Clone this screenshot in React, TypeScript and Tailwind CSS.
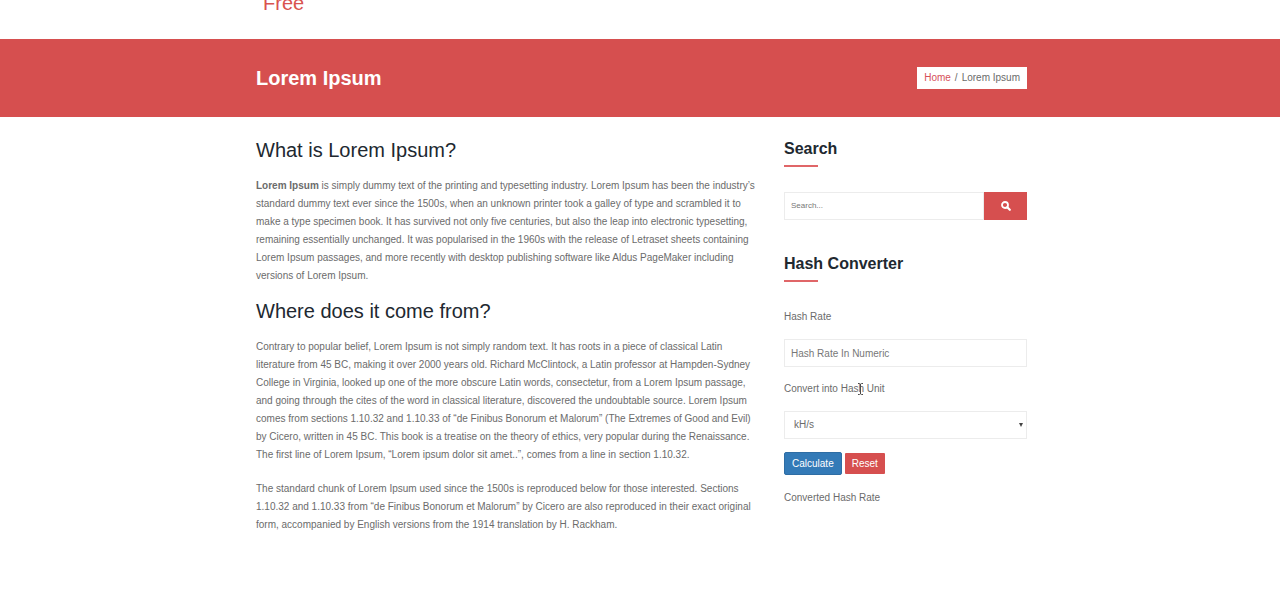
import { useState } from 'react';
import type { FormEvent, ReactNode } from 'react';

const UNITS = ['kH/s', 'MH/s', 'GH/s', 'TH/s', 'PH/s'];

function Container({ className = '', children }: { className?: string; children: ReactNode }) {
  return (
    <div className="pl-[3px]">
      <div className={`mx-auto max-w-[771px] ${className}`}>{children}</div>
    </div>
  );
}

function WidgetTitle({ children }: { children: ReactNode }) {
  return (
    <h3 className="text-base leading-[22px] font-bold text-[#212830]">
      {children}
      <span className="mt-[5px] block h-[2px] w-[34px] bg-[#e06668]" />
    </h3>
  );
}

function SearchIcon() {
  return (
    <svg viewBox="0 0 10 10" className="h-[10px] w-[10px]" fill="none" stroke="currentColor" aria-hidden="true">
      <circle cx="4" cy="4" r="3" strokeWidth="1.8" />
      <path d="M6.3 6.3 8.8 8.8" strokeWidth="2.2" strokeLinecap="round" />
    </svg>
  );
}

function TextCursor() {
  return (
    <svg
      viewBox="0 0 7 12"
      className="absolute -right-[5px] top-0 h-3 w-[7px]"
      fill="none"
      stroke="#4a4a4a"
      aria-hidden="true"
    >
      <path d="M1 .5h1.5l1 .7 1-.7H6M3.5 1v10M1 11.5h1.5l1-.7 1 .7H6" />
    </svg>
  );
}

export default function App() {
  const [rate, setRate] = useState('');
  const [unit, setUnit] = useState(UNITS[0]);
  const [result, setResult] = useState('');

  const calculate = (e: FormEvent) => {
    e.preventDefault();
    const value = Number(rate);
    if (rate && !Number.isNaN(value)) {
      setResult(`${value / 1000 ** (UNITS.indexOf(unit) + 1)} ${unit}`);
    }
  };

  const reset = () => {
    setRate('');
    setUnit(UNITS[0]);
    setResult('');
  };

  return (
    <div className="bg-white font-['Liberation_Sans',Arial,sans-serif] text-[10px] leading-[18px] text-[#6b6b6b]">
      <header className="h-[39px] overflow-hidden">
        <Container>
          <a href="#" className="-mt-2 ml-[7px] block text-xl leading-[22px] text-[#d9534f]">
            Free
          </a>
        </Container>
      </header>

      <section className="bg-[#d64f4f] py-[28px]">
        <Container className="flex items-center justify-between">
          <h1 className="text-xl leading-[22px] font-bold text-white">Lorem Ipsum</h1>
          <nav aria-label="Breadcrumb" className="flex gap-1 bg-white px-[7px] py-[2px]">
            <a href="#" className="text-[#d64f5a]">Home</a>
            <span>/</span>
            <span>Lorem Ipsum</span>
          </nav>
        </Container>
      </section>

      <Container className="flex justify-between gap-4 pt-[21px]">
        <main className="w-[503px]">
          <h2 className="text-xl leading-6 text-[#212830]">What is Lorem Ipsum?</h2>
          <p className="mt-[15px]">
            <strong>Lorem Ipsum</strong> is simply dummy text of the printing and typesetting industry. Lorem Ipsum
            has been the industry’s standard dummy text ever since the 1500s, when an unknown printer took a galley
            of type and scrambled it to make a type specimen book. It has survived not only five centuries, but also
            the leap into electronic typesetting, remaining essentially unchanged. It was popularised in the 1960s
            with the release of Letraset sheets containing Lorem Ipsum passages, and more recently with desktop
            publishing software like Aldus PageMaker including versions of Lorem Ipsum.
          </p>
          <h2 className="mt-[14px] text-xl leading-6 text-[#212830]">Where does it come from?</h2>
          <p className="mt-[15px]">
            Contrary to popular belief, Lorem Ipsum is not simply random text. It has roots in a piece of classical
            Latin literature from 45 BC, making it over 2000 years old. Richard McClintock, a Latin professor at
            Hampden-Sydney College in Virginia, looked up one of the more obscure Latin words, consectetur, from a
            Lorem Ipsum passage, and going through the cites of the word in classical literature, discovered the
            undoubtable source. Lorem Ipsum comes from sections 1.10.32 and 1.10.33 of “de Finibus Bonorum et
            Malorum” (The Extremes of Good and Evil) by Cicero, written in 45 BC. This book is a treatise on the
            theory of ethics, very popular during the Renaissance. The first line of Lorem Ipsum, “Lorem ipsum dolor
            sit amet..”, comes from a line in section 1.10.32.
          </p>
          <p className="mt-4">
            The standard chunk of Lorem Ipsum used since the 1500s is reproduced below for those interested. Sections
            1.10.32 and 1.10.33 from “de Finibus Bonorum et Malorum” by Cicero are also reproduced in their exact
            original form, accompanied by English versions from the 1914 translation by H. Rackham.
          </p>
        </main>

        <aside className="w-[243px] shrink-0">
          <WidgetTitle>Search</WidgetTitle>
          <form role="search" className="mt-[25px] flex h-7" onSubmit={(e) => e.preventDefault()}>
            <input
              type="search"
              aria-label="Search"
              placeholder="Search..."
              className="min-w-0 flex-1 border border-[#ececec] px-1.5 text-[8px] outline-none placeholder:text-[#777]"
            />
            <button
              type="submit"
              aria-label="Submit search"
              className="flex w-[43px] items-center justify-center bg-[#d64f4f] text-white"
            >
              <SearchIcon />
            </button>
          </form>

          <div className="mt-[33px]">
            <WidgetTitle>Hash Converter</WidgetTitle>
          </div>
          <form className="mt-[26px]" onSubmit={calculate}>
            <label htmlFor="rate" className="block">
              Hash Rate
            </label>
            <input
              id="rate"
              value={rate}
              onChange={(e) => setRate(e.target.value)}
              placeholder="Hash Rate In Numeric"
              className="mt-[13px] block h-7 w-full border border-[#ececec] px-1.5 outline-none placeholder:text-[#777]"
            />
            <label htmlFor="unit" className="mt-[13px] block">
              Convert into{' '}
              <span className="relative">
                Has
                <TextCursor />
              </span>
              h Unit
            </label>
            <div className="relative mt-[13px]">
              <select
                id="unit"
                value={unit}
                onChange={(e) => setUnit(e.target.value)}
                className="block h-7 w-full appearance-none border border-[#ececec] bg-white px-[9px] outline-none"
              >
                {UNITS.map((u) => (
                  <option key={u}>{u}</option>
                ))}
              </select>
              <svg
                viewBox="0 0 4 4"
                className="pointer-events-none absolute right-1 top-3 h-1 w-1"
                fill="#444"
                aria-hidden="true"
              >
                <path d="M0 0h4L2 4z" />
              </svg>
            </div>
            <div className="mt-[13px] flex items-center gap-[3px] text-white">
              <button type="submit" className="h-[23px] rounded-[2px] border border-[#2e6da4] bg-[#337ab7] px-[7px]">
                Calculate
              </button>
              <button type="button" onClick={reset} className="h-[21px] rounded-[1px] bg-[#d64f4f] px-[7px]">
                Reset
              </button>
            </div>
            <p className="mt-[14px]">
              Converted Hash Rate <output htmlFor="rate unit">{result}</output>
            </p>
          </form>
        </aside>
      </Container>
    </div>
  );
}
